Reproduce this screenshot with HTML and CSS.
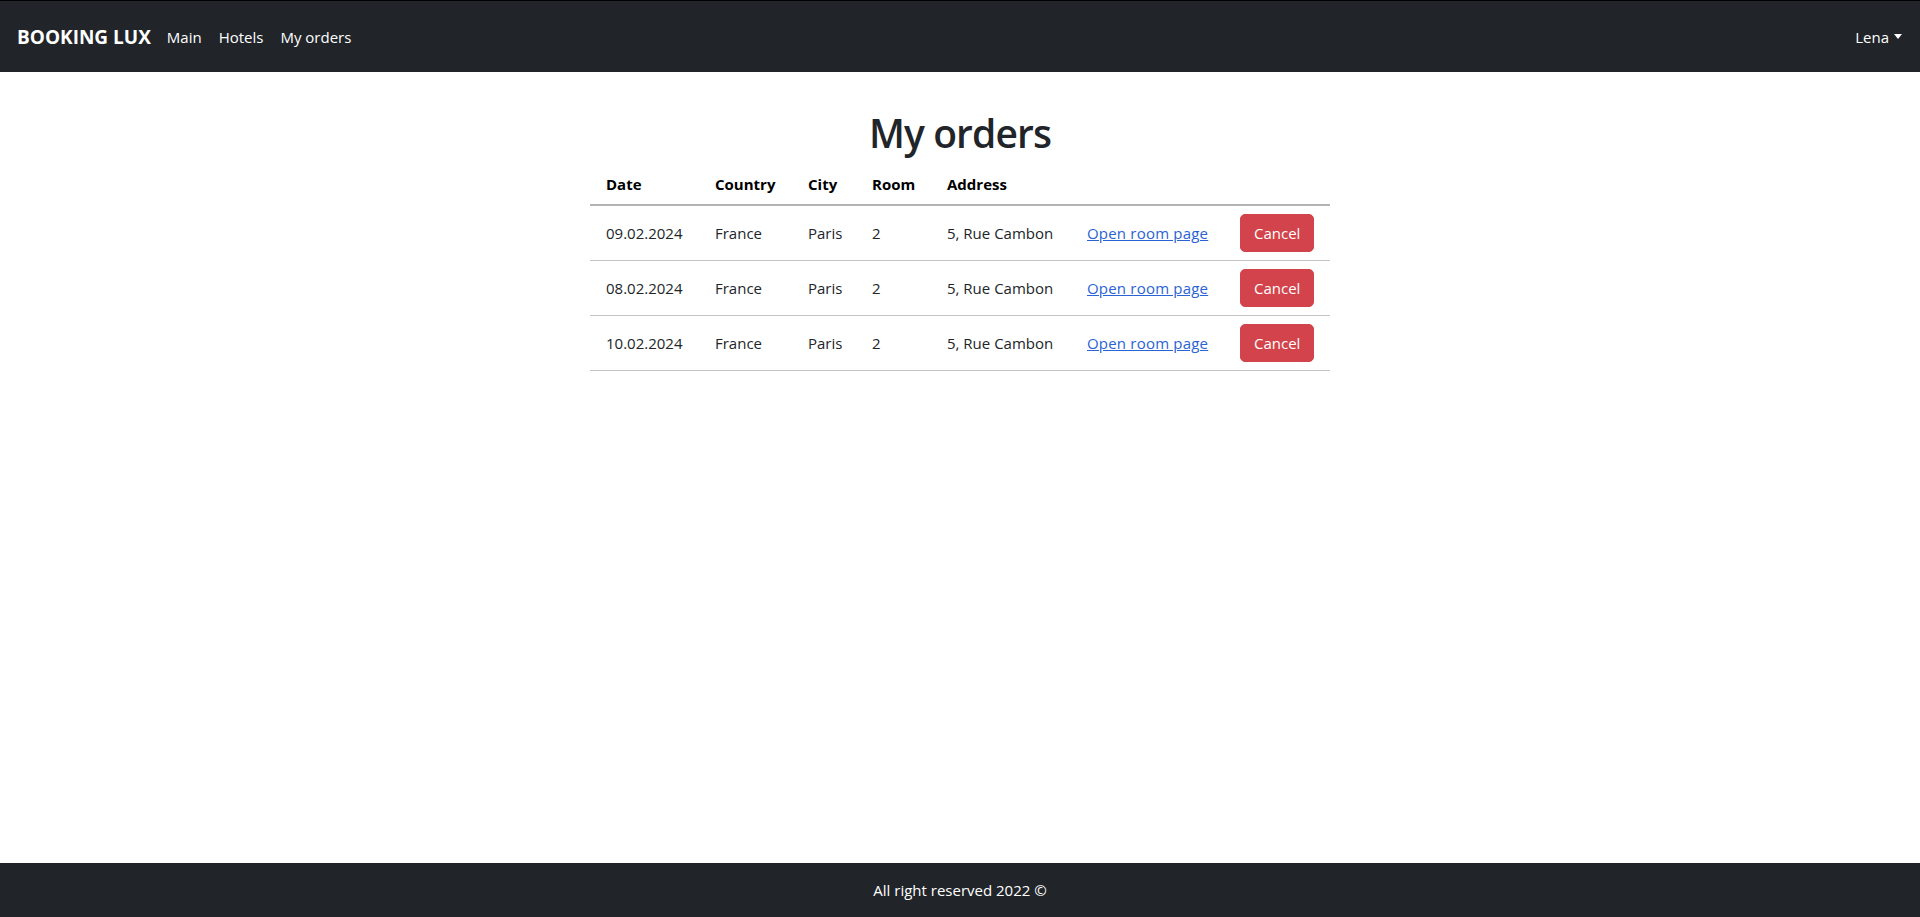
FILE: index.html
```html
<!DOCTYPE html>
<html lang="en">
<head>
<meta charset="utf-8">
<title>My orders - Booking Lux</title>
<link rel="stylesheet" href="styles.css">
</head>
<body>
<div class="page">
  <header class="navbar">
    <nav class="nav-left">
      <a class="brand" href="#">BOOKING LUX</a>
      <a class="nav-link" href="#">Main</a>
      <a class="nav-link" href="#">Hotels</a>
      <a class="nav-link" href="#">My orders</a>
    </nav>
    <a class="user" href="#">Lena<span class="caret"></span></a>
  </header>

  <main class="content">
    <h1 class="title">My orders</h1>
    <table class="orders">
      <colgroup>
        <col class="c-date">
        <col class="c-country">
        <col class="c-city">
        <col class="c-room">
        <col class="c-address">
        <col class="c-link">
        <col class="c-action">
      </colgroup>
      <thead>
        <tr>
          <th>Date</th>
          <th>Country</th>
          <th>City</th>
          <th>Room</th>
          <th>Address</th>
          <th></th>
          <th></th>
        </tr>
      </thead>
      <tbody>
        <tr>
          <td>09.02.2024</td>
          <td>France</td>
          <td>Paris</td>
          <td>2</td>
          <td>5, Rue Cambon</td>
          <td><a class="room-link" href="#">Open room page</a></td>
          <td><button class="btn-cancel" type="button">Cancel</button></td>
        </tr>
        <tr>
          <td>08.02.2024</td>
          <td>France</td>
          <td>Paris</td>
          <td>2</td>
          <td>5, Rue Cambon</td>
          <td><a class="room-link" href="#">Open room page</a></td>
          <td><button class="btn-cancel" type="button">Cancel</button></td>
        </tr>
        <tr>
          <td>10.02.2024</td>
          <td>France</td>
          <td>Paris</td>
          <td>2</td>
          <td>5, Rue Cambon</td>
          <td><a class="room-link" href="#">Open room page</a></td>
          <td><button class="btn-cancel" type="button">Cancel</button></td>
        </tr>
      </tbody>
    </table>
  </main>

  <footer class="footer">All right reserved 2022 ©</footer>
</div>
</body>
</html>
```

FILE: styles.css
```css
* { box-sizing: border-box; }

html, body {
  margin: 0;
  padding: 0;
}

body {
  font-family: "Open Sans", "Noto Sans", "Liberation Sans", sans-serif;
  font-size: 15px;
  line-height: 24px;
  color: #212529;
  background: #fff;
}

.page {
  min-height: 100vh;
  display: flex;
  flex-direction: column;
}

.navbar {
  height: 72px;
  background: #212529;
  border-top: 1px solid #000;
  display: flex;
  align-items: center;
  justify-content: space-between;
  padding: 0 18px 0 17px;
}

.nav-left {
  display: flex;
  align-items: center;
}

.brand {
  color: #fff;
  font-weight: 700;
  font-size: 19px;
  text-decoration: none;
  margin-right: 16px;
}

.nav-link {
  color: #fff;
  text-decoration: none;
  font-size: 15px;
  margin-right: 17px;
}

.user {
  color: #fff;
  text-decoration: none;
  font-size: 15px;
  display: flex;
  align-items: center;
}

.caret {
  display: inline-block;
  width: 0;
  height: 0;
  margin-left: 5px;
  border-top: 5px solid #fff;
  border-left: 4px solid transparent;
  border-right: 4px solid transparent;
}

.content {
  flex: 1;
  padding-top: 38px;
  display: flex;
  flex-direction: column;
  align-items: center;
}

.title {
  margin: 0 0 8px;
  font-size: 39px;
  line-height: 46px;
  font-weight: 600;
  letter-spacing: -0.9px;
  color: #212529;
}

.orders {
  border-collapse: collapse;
  table-layout: fixed;
  width: 740px;
}

.c-date { width: 109px; }
.c-country { width: 93px; }
.c-city { width: 64px; }
.c-room { width: 75px; }
.c-address { width: 140px; }
.c-link { width: 153px; }
.c-action { width: 106px; }

.orders th,
.orders td {
  padding: 8px 16px;
  text-align: left;
  vertical-align: middle;
  white-space: nowrap;
}

.orders th {
  font-weight: 700;
  color: #000;
  border-bottom: 2px solid #b3b3b3;
}

.orders td {
  border-bottom: 1px solid #c4c4c4;
  color: #212529;
}

.room-link {
  color: #2a63d4;
  text-decoration: underline;
  letter-spacing: 0.2px;
}

.btn-cancel {
  font-family: inherit;
  font-size: 15px;
  line-height: 24px;
  color: #fff;
  background: #d2434b;
  border: 1px solid #d2434b;
  border-radius: 5px;
  padding: 6px 13px;
  cursor: pointer;
}

.footer {
  height: 54px;
  background: #212529;
  color: #fff;
  display: flex;
  align-items: center;
  justify-content: center;
  font-size: 15px;
}
```
